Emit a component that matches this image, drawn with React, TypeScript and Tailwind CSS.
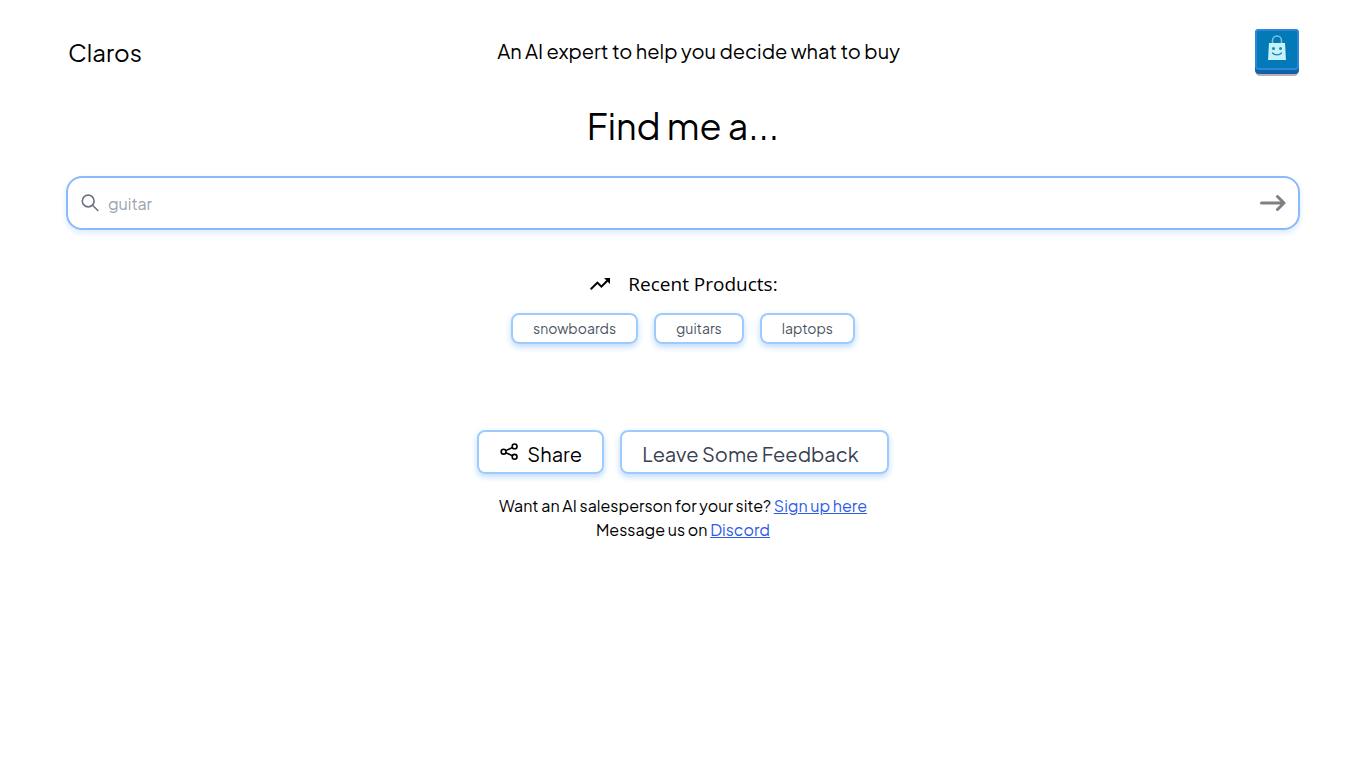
import { MdTrendingUp } from "react-icons/md";

const recentProducts = ["snowboards", "guitars", "laptops"];

const BagLogo = () => (
    <svg className="w-11 h-12" viewBox="0 0 44 48" aria-hidden="true">
        <rect x="1" y="5" width="42" height="43" rx="4" fill="#b9b0b4" />
        <rect x="0" y="1" width="44" height="45" rx="4" fill="#1160a8" />
        <rect x="0" y="1" width="44" height="41" rx="4" fill="#2b86dc" />
        <rect x="2" y="3" width="40" height="37" rx="2" fill="#0479b8" />
        <path
            d="M17.500 16V12.500a4.500 4.500 0 0 1 9 0V16"
            fill="none"
            stroke="#7cc4dc"
            strokeWidth="1.500"
        />
        <path d="M14 15h16l1 17H13z" fill="#c4f2f8" />
        <circle cx="18.500" cy="20.500" r="1.500" fill="#1787b9" />
        <circle cx="25.500" cy="20.500" r="1.500" fill="#1787b9" />
        <path
            d="M17.500 25c2 2.500 7 2.500 9 0"
            fill="none"
            stroke="#1787b9"
            strokeWidth="1.300"
            strokeLinecap="round"
        />
    </svg>
);

const IconSearch = () => (
    <svg
        className="w-5 h-5 shrink-0"
        viewBox="0 0 20 20"
        fill="none"
        stroke="#6b7280"
        strokeWidth="1.600"
        strokeLinecap="round"
        aria-hidden="true"
    >
        <circle cx="8.200" cy="8" r="5.900" />
        <path d="M12.500 12.300L17.800 17.500" />
    </svg>
);

const IconArrow = () => (
    <svg
        className="w-7 h-5"
        viewBox="0 0 28 20"
        fill="none"
        stroke="#808080"
        strokeWidth="3"
        strokeLinecap="round"
        strokeLinejoin="round"
        aria-hidden="true"
    >
        <path d="M3.500 10H26M19.500 3.500L26 10l-6.500 6.500" />
    </svg>
);

const IconShare = () => (
    <svg
        className="w-5 h-5"
        viewBox="0 0 20 20"
        fill="none"
        stroke="currentColor"
        strokeWidth="1.600"
        aria-hidden="true"
    >
        <circle cx="4.600" cy="9.700" r="2.400" />
        <circle cx="15.600" cy="4.400" r="2.400" />
        <circle cx="15.600" cy="14.800" r="2.400" />
        <path d="M6.800 8.600L13.400 5.500M6.800 10.700l6.600 3.100" />
    </svg>
);

export default function App() {
    return (
        <div className="bg-white text-black font-['Plus_Jakarta_Sans',Inter,sans-serif]">
            <header className="flex items-center justify-between h-[104px] pl-[68px] pr-[67px]">
                <h2 className="text-2xl">Claros</h2>
                <p className="pb-0.5 text-xl">
                    An AI expert to help you decide what to buy
                </p>
                <BagLogo />
            </header>

            <main className="flex flex-col items-center px-[66px]">
                <h1 className="text-4xl leading-[44px]">Find me a...</h1>

                <form
                    className="flex items-center w-full h-[54px] mt-7 px-3 border-2 border-[#8bb9fb] rounded-2xl shadow-[0_3px_6px_#dbeafe]"
                    onSubmit={(e) => e.preventDefault()}
                >
                    <IconSearch />
                    <input
                        type="text"
                        aria-label="Product"
                        placeholder="guitar"
                        className="flex-1 min-w-0 px-2 pt-0.5 text-base outline-none placeholder:text-[#9ca3af]"
                    />
                    <button type="submit" aria-label="Search">
                        <IconArrow />
                    </button>
                </form>

                <div className="flex items-center gap-4 mt-10">
                    <MdTrendingUp className="w-6 h-6" />
                    <h3 className="font-['Open_Sans',sans-serif] text-[19px] leading-7">
                        Recent Products:
                    </h3>
                </div>

                <div className="flex gap-4 mt-[15px]">
                    {recentProducts.map((product) => (
                        <button
                            key={product}
                            type="button"
                            className="h-[31px] pb-0.5 px-5 text-sm text-[#4b5563] border-2 border-[#9dcbfd] rounded-lg shadow-[0_3px_6px_#bfdbfe]"
                        >
                            {product}
                        </button>
                    ))}
                </div>

                <div className="flex gap-4 mt-[86px] text-xl">
                    <button
                        type="button"
                        className="flex items-center gap-2 h-11 px-5 border-2 border-[#9dcbfd] rounded-lg shadow-[0_3px_6px_#bfdbfe]"
                    >
                        <IconShare />
                        <span className="pt-1">Share</span>
                    </button>
                    <button
                        type="button"
                        className="h-11 pt-1 pl-5 pr-7 text-[#374151] border-2 border-[#9dcbfd] rounded-lg shadow-[0_3px_6px_#bfdbfe]"
                    >
                        Leave Some Feedback
                    </button>
                </div>

                <div className="mt-5 text-base text-center">
                    <p>
                        Want an AI salesperson for your site?{" "}
                        <a href="#signup" className="text-[#2e5ce6] underline">
                            Sign up here
                        </a>
                    </p>
                    <p>
                        Message us on{" "}
                        <a href="#discord" className="text-[#2e5ce6] underline">
                            Discord
                        </a>
                    </p>
                </div>
            </main>
        </div>
    );
}
